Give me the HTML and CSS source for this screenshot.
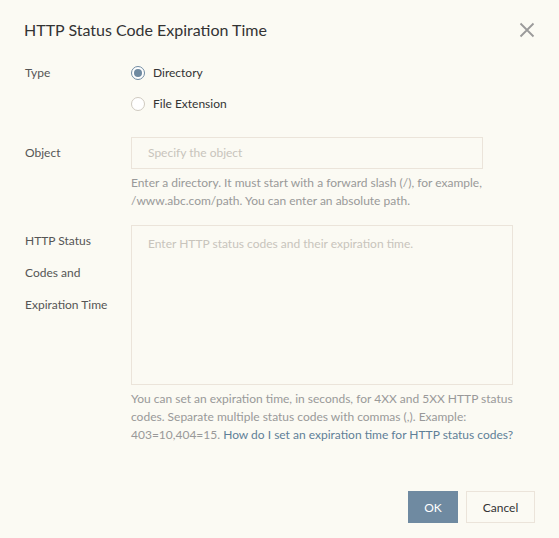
FILE: index.html
```html
<!DOCTYPE html>
<html lang="en">
<head>
<meta charset="utf-8">
<title>HTTP Status Code Expiration Time</title>
<link rel="stylesheet" href="styles.css">
</head>
<body>
<div class="dialog">
  <div class="dialog-header">
    <h2 class="dialog-title">HTTP Status Code Expiration Time</h2>
    <button class="dialog-close" aria-label="Close">
      <svg width="16" height="16" viewBox="0 0 16 16"><path d="M1.5 1.5 L14.5 14.5 M14.5 1.5 L1.5 14.5" stroke="#9a9a9a" stroke-width="1.8" fill="none"/></svg>
    </button>
  </div>
  <div class="dialog-body">
    <div class="form-row row-type">
      <div class="form-label">Type</div>
      <div class="form-control">
        <label class="radio"><span class="radio-dot checked"></span><span>Directory</span></label>
        <label class="radio"><span class="radio-dot"></span><span>File Extension</span></label>
      </div>
    </div>
    <div class="form-row row-object">
      <div class="form-label">Object</div>
      <div class="form-control">
        <div class="input"><span class="placeholder">Specify the object</span></div>
        <div class="help">Enter a directory. It must start with a forward slash (/), for example, /www.abc.com/path. You can enter an absolute path.</div>
      </div>
    </div>
    <div class="form-row">
      <div class="form-label">HTTP Status<br>Codes and<br>Expiration Time</div>
      <div class="form-control">
        <div class="textarea"><span class="placeholder">Enter HTTP status codes and their expiration time.</span></div>
        <div class="help">You can set an expiration time, in seconds, for 4XX and 5XX HTTP status codes. Separate multiple status codes with commas (,). Example: 403=10,404=15. <a class="link" href="#">How do I set an expiration time for HTTP status codes?</a></div>
      </div>
    </div>
  </div>
  <div class="dialog-footer">
    <button class="btn btn-primary">OK</button>
    <button class="btn btn-normal">Cancel</button>
  </div>
</div>
</body>
</html>
```
FILE: styles.css
```css
* { box-sizing: border-box; }
html, body { margin: 0; padding: 0; }
body {
  background: #fbfaf3;
  font-family: "Lato", "Open Sans", sans-serif;
  font-size: 12px;
  color: #555;
  width: 559px;
  height: 538px;
  overflow: hidden;
}
.dialog { width: 559px; height: 538px; display: flex; flex-direction: column; }
.dialog-header {
  height: 57px;
  display: flex;
  align-items: center;
  justify-content: space-between;
  padding: 2px 24px 0 24px;
}
.dialog-title {
  margin: 0;
  font-size: 16px;
  font-weight: normal;
  color: #333;
}
.dialog-close {
  border: 0; background: none; padding: 0; margin: 0;
  width: 16px; height: 16px; display: flex;
}
.dialog-body { padding: 0 24px; display: flex; flex-direction: column; }
.form-row { display: flex; }
.row-type { margin-bottom: 18px; }
.row-object { margin-bottom: 15px; }
.form-label { width: 107px; padding-left: 1px; line-height: 32px; color: #555; flex: none; }
.form-control { flex: 1; }
.radio { display: flex; align-items: center; gap: 8px; height: 31px; color: #333; }
.radio-dot {
  width: 14px; height: 14px; border-radius: 50%;
  border: 1px solid #cfcac0; background: #fff; position: relative; flex: none;
}
.radio-dot.checked { border-color: #6f8aa1; }
.radio-dot.checked::after {
  content: ""; position: absolute; left: 2px; top: 2px;
  width: 8px; height: 8px; border-radius: 50%; background: #6f8aa1;
}
.input {
  width: 352px; height: 32px; border: 1px solid #ebe4da;
  padding: 0 16px; line-height: 30px;
}
.textarea {
  width: 382px; height: 160px; border: 1px solid #ebe4da;
  padding: 9px 16px; line-height: 18px;
}
.placeholder { color: #c8c4bc; }
.help { width: 390px; margin-top: 5px; line-height: 18px; color: #999; }
.link { color: #5f7f98; text-decoration: none; }
.dialog-footer {
  margin-top: auto;
  display: flex; justify-content: flex-end; gap: 8px;
  padding: 0 24px 15px 0;
}
.btn {
  height: 32px; font-family: inherit; font-size: 12px; padding: 0 16px;
  border: 1px solid transparent; cursor: pointer;
}
.btn-primary { background: #6f8aa1; color: #fff; width: 50px; padding: 0; }
.btn-normal { background: transparent; border-color: #ebe4da; color: #333; width: 69px; padding: 0; }
```
